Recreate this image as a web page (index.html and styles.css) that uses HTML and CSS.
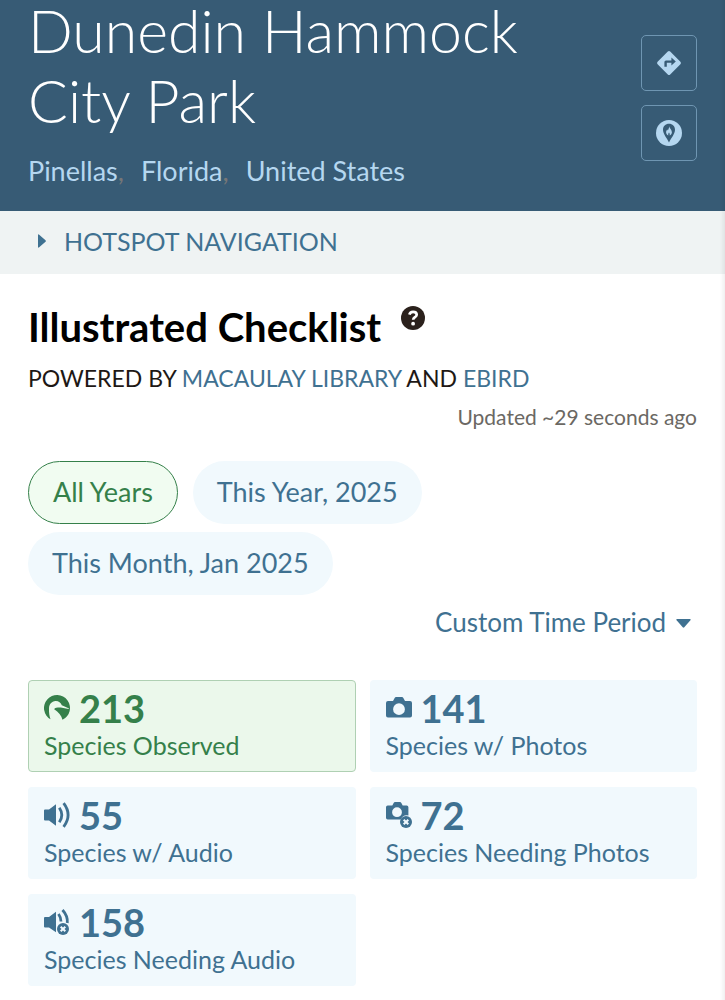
FILE: index.html
```html
<!DOCTYPE html>
<html lang="en">
<head>
<meta charset="utf-8">
<meta name="viewport" content="width=device-width, initial-scale=1">
<title>Dunedin Hammock City Park</title>
<link rel="stylesheet" href="styles.css">
</head>
<body>
<header class="hero">
  <div class="hero-text">
    <h1 class="hero-title">Dunedin Hammock City Park</h1>
    <nav class="places" aria-label="Region">
      <span><a href="#">Pinellas</a>,</span>
      <span><a href="#">Florida</a>,</span>
      <span><a href="#">United States</a></span>
    </nav>
  </div>
  <div class="hero-actions">
    <button class="square" type="button" aria-label="Directions">
      <svg width="26" height="26" viewBox="0 0 26 26"><path fill="#b5d7f0" fill-rule="evenodd" d="M11.8 1.6a1.7 1.7 0 0 1 2.4 0l10.2 10.2a1.7 1.7 0 0 1 0 2.4L14.2 24.4a1.7 1.7 0 0 1-2.4 0L1.6 14.2a1.7 1.7 0 0 1 0-2.4zM8.400 16.800h2.400v-4h4.600v2.800l4.400-4-4.400-4v2.800H10q-1.600 0-1.600 1.600z"/></svg>
    </button>
    <button class="square" type="button" aria-label="Explore hotspots">
      <svg width="26" height="26" viewBox="0 0 26 26"><circle cx="13" cy="13" r="13" fill="#b5d7f0"/><path fill="#375b75" d="M13 3.800c3.500 0 6 2.500 6 6 0 4.200-3.700 8-6 12.600-2.300-4.600-6-8.400-6-12.600 0-3.500 2.500-6 6-6z"/><path fill="#b5d7f0" d="M13.200 6.200c.2 2 2.700 3.500 2.700 6 0 1.600-1 2.800-2.200 3.200.3-1.500-.2-2.300-.7-3-.5.700-1 1.500-.7 3-1.200-.4-2.200-1.600-2.200-3.200 0-1.200.6-2 1.200-2.800l.6 1c.6-1.300 1.200-2.600 1.300-4.200z"/></svg>
    </button>
  </div>
</header>
<button class="hotspot-nav" type="button" aria-expanded="false">
  <svg width="8" height="14" viewBox="0 0 8 14"><path fill="#3f7191" d="M0 1.200Q0-.5 1.200.7L7.500 6.200Q8.300 7 7.500 7.800L1.200 13.300Q0 14.500 0 12.800z"/></svg>
  HOTSPOT NAVIGATION
</button>
<main class="content">
  <div class="title-row">
    <h2 class="title">Illustrated Checklist</h2>
    <button class="help" type="button" aria-label="Help">
      <svg width="24" height="24" viewBox="0 0 24 24"><circle cx="12" cy="12" r="12" fill="#2b211c"/><path d="M8.400 8.600C8.800 6.700 10.200 5.800 12.100 5.800c2.100 0 3.600 1.100 3.600 2.900 0 2.500-3.500 2.500-3.500 5" fill="none" stroke="#fff" stroke-width="2.700"/><circle cx="12.100" cy="17.700" r="1.900" fill="#fff"/></svg>
    </button>
  </div>
  <p class="powered">POWERED BY <a href="#">MACAULAY LIBRARY</a> AND <a href="#">EBIRD</a></p>
  <p class="updated">Updated ~29 seconds ago</p>
  <div class="filters">
    <button class="pill pill-active" type="button" aria-pressed="true">All Years</button>
    <button class="pill" type="button" aria-pressed="false">This Year, 2025</button>
    <button class="pill" type="button" aria-pressed="false">This Month, Jan 2025</button>
  </div>
  <div class="custom">
    <select class="custom-select" aria-label="Time period"><option>Custom Time Period</option></select>
    <svg width="15" height="9" viewBox="0 0 15 9"><path fill="#3f7191" d="M1.200 0h12.600q1.700 0 .6 1.300L8.300 8.300q-.8.900-1.600 0L.6 1.300Q-.5 0 1.200 0z"/></svg>
  </div>
  <div class="stats">
    <button class="stat stat-active" type="button">
      <span class="stat-top"><svg width="26" height="26" viewBox="0 0 26 26"><path fill="currentColor" d="M6.500 24.300A13 13 0 1 1 18.500 24.800C17.500 20.500 14.500 17 10.200 14.300c.3-.8 1-1.400 2-1.600 2.500-.2 4.400-.3 5.800.1l6.500 1.200c.6 0 .6-.5 0-.7L17.800 10.200C16.800 7.300 14.400 5.700 11.500 5.900 7.500 6.200 5.200 9.200 5 13.200c-.1 4 .2 7.500 1.500 11.100z"/></svg><span class="stat-number">213</span></span>
      <span class="stat-label">Species Observed</span>
    </button>
    <button class="stat" type="button">
      <span class="stat-top"><svg width="26" height="26" viewBox="0 0 26 26"><path fill="currentColor" fill-rule="evenodd" d="M2 6h5l1.500-2.800Q9 2 10.200 2h5.600q1.200 0 1.700 1.200L19 6h5q2 0 2 2v12.500q0 2-2 2H2q-2 0-2-2V8q0-2 2-2zm11 2.300a5.900 5.900 0 1 0 0 11.800 5.900 5.900 0 0 0 0-11.800z"/></svg><span class="stat-number">141</span></span>
      <span class="stat-label">Species w/ Photos</span>
    </button>
    <button class="stat" type="button">
      <span class="stat-top"><svg width="26" height="26" viewBox="0 0 26 26"><path fill="currentColor" d="M0 8.500Q0 7.500 1 7.500h4l7-5.300v21.600L5 18.500H1q-1 0-1-1z"/><g fill="none" stroke="currentColor" stroke-width="2.800"><path d="M15.300 5.700q5 7.300 0 14.600"/><path d="M19.600 1.200q9 11.800 0 23.600"/></g></svg><span class="stat-number">55</span></span>
      <span class="stat-label">Species w/ Audio</span>
    </button>
    <button class="stat" type="button">
      <span class="stat-top"><svg width="26" height="26" viewBox="0 0 26 26"><path fill="currentColor" fill-rule="evenodd" d="M1.700 3.500h4.600L7.500 1.200Q8 0 9.200 0h4.600q1.200 0 1.700 1.200l1.200 2.300h4q1.700 0 1.700 1.700v8.200a7 7 0 0 0-7.700 4.100H1.700Q0 17.500 0 15.800V5.200q0-1.700 1.700-1.700zM11 5.300a4.900 4.900 0 1 0 0 9.800 4.900 4.900 0 0 0 0-9.800z"/><circle cx="20" cy="20" r="6" fill="currentColor"/><path d="M17.700 17.700l4.600 4.600m0-4.600l-4.600 4.600" stroke="#f1f9fe" stroke-width="2"/></svg><span class="stat-number">72</span></span>
      <span class="stat-label">Species Needing Photos</span>
    </button>
    <button class="stat" type="button">
      <span class="stat-top"><svg width="26" height="26" viewBox="0 0 26 26"><path fill="currentColor" d="M0 9Q0 8 1 8h4l7-5.300v20.600L5 18.500H1q-1 0-1-1z"/><g fill="none" stroke="currentColor" stroke-width="2.800"><path d="M14.500 5q2.600 3.600 2.500 7.500"/><path d="M18.500 1q5.500 6 4.800 13"/></g><circle cx="19" cy="20" r="6" fill="currentColor"/><path d="M16.700 17.700l4.600 4.600m0-4.600l-4.600 4.600" stroke="#f1f9fe" stroke-width="2"/></svg><span class="stat-number">158</span></span>
      <span class="stat-label">Species Needing Audio</span>
    </button>
  </div>
</main>
</body>
</html>
```
FILE: styles.css
```css
* { box-sizing: border-box; }
body {
  margin: 0;
  background: #fff;
  color: #1e1815;
  font-family: Lato, "Open Sans", sans-serif;
}
body::after {
  content: "";
  position: fixed;
  top: 0;
  right: 0;
  bottom: 0;
  width: 5px;
  background: linear-gradient(to right, transparent, rgba(0, 0, 0, 0.06));
  pointer-events: none;
}
h1, h2, p { margin: 0; }
a { color: #3f7191; text-decoration: none; }
button, select { border: 0; margin: 0; padding: 0; background: none; font: inherit; color: #3f7191; cursor: pointer; }
svg { display: block; flex: none; }

.hero {
  display: flex;
  justify-content: space-between;
  gap: 40px;
  padding: 0 28px 20px;
  background: #375b75;
}
.hero-text { flex: 1; }
.hero-title {
  margin-top: -4px;
  color: #fff;
  font-size: 59px;
  font-weight: 300;
  line-height: 70px;
}
.places {
  display: flex;
  flex-wrap: wrap;
  gap: 0 17px;
  margin-top: 15px;
  font-size: 27px;
  line-height: 40px;
  color: #777;
}
.places a { color: #b5d7f0; }
.hero-actions { display: flex; flex-direction: column; gap: 14px; padding-top: 35px; }
.square {
  display: grid;
  place-items: center;
  width: 56px;
  height: 56px;
  border: 1px solid #6f96b2;
  border-radius: 5px;
}
.hotspot-nav {
  display: flex;
  align-items: center;
  gap: 18px;
  width: 100%;
  height: 63px;
  padding: 0 38px 3px;
  background: #eff3f3;
  font-size: 25px;
}
.content { padding: 28px 28px 14px; }
.title-row { display: flex; align-items: flex-start; gap: 20px; }
.title { color: #000; font-size: 40px; line-height: 50px; font-weight: 700; }
.help { margin-top: 4px; }
.powered { margin-top: 11px; font-size: 23px; line-height: 30px; }
.updated { margin-top: 10px; color: #6b6863; font-size: 21px; line-height: 28px; text-align: right; }
.filters { display: flex; flex-wrap: wrap; gap: 8px 15px; margin-top: 30px; }
.pill {
  height: 63px;
  padding: 0 24px 2px;
  border-radius: 32px;
  background: #f1f9fd;
  font-size: 27px;
}
.pill-active { border: 1px solid #35804a; background: #f1fcf1; color: #35804a; }
.custom {
  display: flex;
  justify-content: flex-end;
  align-items: center;
  gap: 9px;
  margin-top: 8px;
  padding-right: 6px;
}
.custom-select { appearance: none; height: 40px; padding-bottom: 2px; font-size: 26px; }
.stats {
  display: grid;
  grid-template-columns: 1fr 1fr;
  gap: 15px 14px;
  margin-top: 37px;
}
.stat {
  display: flex;
  flex-direction: column;
  height: 92px;
  padding: 8px 15px;
  border: 1px solid transparent;
  border-radius: 4px;
  background: #f1f9fd;
  text-align: left;
}
.stat-active { border-color: #afd0b3; background: #ebf8eb; color: #35804a; }
.stat-top { display: flex; align-items: center; gap: 9px; }
.stat-number { font-size: 38px; line-height: 38px; font-weight: 700; }
.stat-label { font-size: 25px; line-height: 36px; }
```
